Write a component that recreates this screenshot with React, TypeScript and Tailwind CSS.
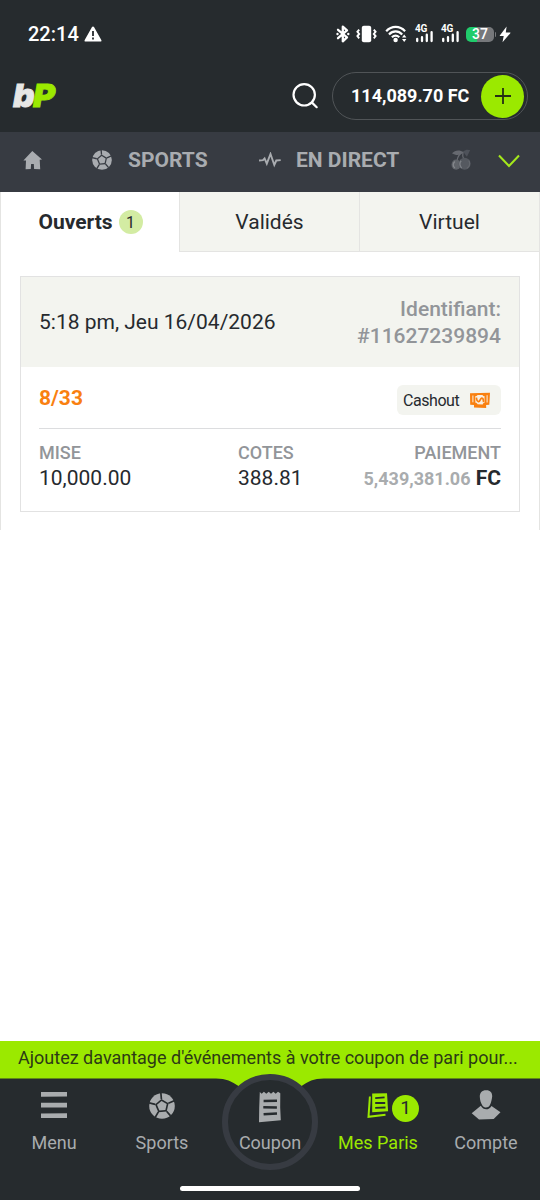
import React from "react";

function Football({ className, cut }: { className?: string; cut: string }) {
  return (
    <svg viewBox="0 0 26 26" className={className} fill="none">
      <circle cx="13" cy="13" r="12.8" fill="currentColor" />
      <g transform="rotate(-5 13 13)">
        <g stroke={cut} strokeWidth="1.7">
          <path d="M13 6V0M19.6 10.8l6-2M17.1 18.6l3.6 5M8.9 18.6l-3.6 5M6.4 10.8l-6-2" />
        </g>
        <path d="M13 5.9l6.8 4.9-2.6 8H8.8l-2.6-8z" fill={cut} />
        <path d="M13 7.9l4.9 3.5-1.9 5.8h-6l-1.9-5.8z" fill="currentColor" />
      </g>
    </svg>
  );
}

function Bluetooth() {
  return (
    <svg viewBox="0 0 14 18" className="h-[18px] w-[14px]" fill="none" stroke="#fff" strokeWidth="2.3" strokeLinejoin="round">
      <path d="M2 4.8l9 7.6-4.2 3.9V1.7L11 5.4l-9 7.8" strokeLinecap="round" />
      <circle cx="1.5" cy="9" r="1.2" fill="#fff" stroke="none" />
      <circle cx="12.3" cy="9" r="1.2" fill="#fff" stroke="none" />
    </svg>
  );
}

function Vibrate() {
  return (
    <svg viewBox="0 0 21 18" className="h-[18px] w-[21px]" fill="none">
      <rect x="5.8" y="0.7" width="9.4" height="16.6" rx="2" fill="#fff" />
      <path d="M3.2 4.6L1.4 6.8l1.8 2.1-1.8 2.2 1.8 2.2M17.8 4.6l1.8 2.2-1.8 2.1 1.8 2.2-1.8 2.2" stroke="#fff" strokeWidth="1.9" />
    </svg>
  );
}

function Wifi() {
  return (
    <svg viewBox="0 0 22 18" className="h-[18px] w-[22px]" fill="none">
      <path d="M1.2 6.2C6.6.5 14.7.5 20.1 6.2M4 9.4c3.9-4 9.4-4 13.2 0M6.9 12.3c2.2-2.1 5.2-2.1 7.4 0" stroke="#fff" strokeWidth="2.2" />
      <circle cx="10.6" cy="15" r="2.2" fill="#fff" />
      <path d="M17 12.6l2.2-3 2.2 3zM17 13.9l2.2 3 2.2-3z" fill="#fff" />
    </svg>
  );
}

function Signal() {
  return (
    <span className="relative block h-[18px] w-[18px]">
      <span className="absolute -top-px left-0 text-[10px] leading-[10px] font-bold tracking-[-0.3px]">4G</span>
      <svg viewBox="0 0 18 18" className="block h-[18px] w-[18px]" stroke="#fff" strokeWidth="2.3" strokeLinecap="round">
        <path d="M2.2 14v2M7 12.2V16M11.8 9.7V16M16.6 7.2V16" />
      </svg>
    </span>
  );
}

function Home() {
  return (
    <svg viewBox="0 0 20 20" className="h-5 w-5" fill="currentColor">
      <path d="M9.3.9L.4 10.6l2.600-.2-.4 8.800 5.200-.1.3-5h2.700l.3 5 6.100.1-.5-9.500 2.300-.2z" />
    </svg>
  );
}

function Cherries() {
  return (
    <svg viewBox="0 0 20 22" className="h-[22px] w-5">
      <path d="M1 4.3C4 .7 9 .5 12.5 3.3 10 6.3 5.3 7.2 1 4.3z" fill="#666970" />
      <path d="M12 2.5c3-2.3 5-2 7.2-1.4l-3.3 6.6" fill="#4e525a" />
      <path d="M10 4c-3 3-4 5-4 9M12 3c-1 4 0 6 1 8" stroke="#686b72" strokeWidth="1.2" fill="none" />
      <ellipse cx="5.1" cy="15.7" rx="4.6" ry="5.1" fill="#60646a" />
      <path d="M3.8 12.5c-2 2.1-1.9 4.7.1 6.7" stroke="#85888d" strokeWidth="1.2" fill="none" />
      <circle cx="13.6" cy="14.8" r="6" fill="#555960" />
      <path d="M10.1 11.8c-1.8 2.3-1.7 4.7.5 7.3" stroke="#7d8086" strokeWidth="1.4" fill="none" />
      <path d="M17.8 11.5c1.7 3.1.6 6.3-2 7.9" stroke="#666a70" strokeWidth="1.1" fill="none" />
    </svg>
  );
}

function Cash() {
  return (
    <svg viewBox="0 0 22 17" className="h-[17px] w-[22px]" fill="none">
      <path d="M1 1.3L21 .8l-.7 12-3.2.3.1 3-12.2-.6V13L1.2 12.7z" fill="#f98010" />
      <path d="M3.9 3.5v6.8M18.1 3.2v7.3" stroke="#f9efe2" strokeWidth="1" />
      <path d="M6.3 4.1c1.1.2 1.9-.2 2.2-1.1h5.1c.2.9.9 1.3 1.9 1.1v6.6c-1.1.2-1.7.8-1.8 1.9l-5.1-.3c-.2-1.1-1-1.600-2.200-1.600z" fill="#f9efe2" />
      <path d="M7.3 5.600c.7 1.200-.2 3.600 2 4 2.100.4 1.600-3.200 3.400-3.400 2.200-.1 1.300 2.700 2 3.800" stroke="#f98010" strokeWidth="1.7" />
    </svg>
  );
}

function Receipt() {
  return (
    <svg viewBox="0 0 26 32" className="h-8 w-[26px]">
      <path d="M2.8 1l1.900 1.800L6.900.8l2.400 2L11.700.8l2.300 1.900L16.400.8l2.300 1.900L21 .8l2.300 1.500-.1 14.300.6 12.600L2 31.200l.2-14z" fill="#a9acae" />
      <path d="M6.600 9.900l13.400-.1M6.300 16.200l13.600.2M6.600 23.300l13.400-.9" stroke="#262b2e" strokeWidth="2.500" />
    </svg>
  );
}

function Bets() {
  return (
    <svg viewBox="0 0 22 27" className="h-[27px] w-[22px]" fill="none">
      <path d="M5.200 1.500L20 1.200l1.100 18.100-15.900.9z" fill="#9be900" />
      <path d="M8.200 6.200l9.400-.9M8.200 11h10M8.200 15.800l10.300-.3" stroke="#262b2e" strokeWidth="1.800" />
      <path d="M2.900 4.500L1.500 24.800l17-2.100" stroke="#9be900" strokeWidth="2" />
    </svg>
  );
}

function User() {
  return (
    <svg viewBox="0 0 30 32" className="h-8 w-[30px]" fill="#a9acae">
      <path d="M15 1.200c3.800-.3 6.500 2 6.200 6.300-.4 3-1 6.300-2.400 8.800-1.400 2.800-5.600 3-7.300.4C9.700 14 9 11.300 8.800 7.800 8.600 3.800 11 1.200 15 1.200z" />
      <path d="M9.800 16.800c2.600 4.600 8 4.800 10.700.2L29.500 23.200 22.700 29.900 8 30.600.7 24.300z" />
    </svg>
  );
}

function StatusBar() {
  return (
    <div className="flex h-[68px] items-center pl-7 text-white">
      <span className="text-[20px] leading-6 font-medium">22:14</span>
      <svg viewBox="0 0 18 16" className="ml-[5px] h-4 w-[18px]">
        <path d="M9 .4c.5 0 .8.3 1 .6l7.300 13c.5.900 0 1.600-.9 1.600H1.600c-.9 0-1.400-.7-.9-1.600L8 1c.2-.300.500-.6 1-.6z" fill="#fff" />
        <path d="M9 5v5M9 11.500v2" stroke="#262b2e" strokeWidth="1.800" />
      </svg>
      <div className="ml-auto flex items-center pr-[29px]">
        <Bluetooth />
        <span className="ml-[6px]"><Vibrate /></span>
        <span className="ml-[8px]"><Wifi /></span>
        <span className="ml-[8px]"><Signal /></span>
        <span className="ml-[8px]"><Signal /></span>
        <span className="ml-[7px] flex h-[15px] w-7 items-center justify-center rounded-[5px] bg-[linear-gradient(to_right,#20cc6b_38%,#76787b_38%)] text-[14px] leading-[15px] font-medium">37</span>
        <span className="ml-px h-[5px] w-px rounded-r bg-[#76787b]" />
        <svg viewBox="0 0 12 17" className="ml-[3px] h-[17px] w-3 fill-white">
          <path d="M7.600.5L.8 9.400c-.3.400 0 .7.300.7h3.600L3.500 16.300 11.300 7.200c.3-.4.100-.8-.4-.8H6.800z" />
        </svg>
      </div>
    </div>
  );
}

function Header() {
  return (
    <div className="flex h-16 items-start px-3">
      <div className="mt-[11px] ml-px flex origin-left scale-x-105 font-['Inter',sans-serif] text-[32px] leading-[34px] font-black italic [-webkit-text-stroke-width:0.8px]">
        <span className="w-[19px] text-[#e7e7e5]">b</span>
        <span className="text-[#9be900]">P</span>
      </div>
      <svg viewBox="0 0 28 28" className="mt-[14px] mr-[13px] ml-auto h-7 w-7" fill="none" stroke="#fff" strokeWidth="2.200" strokeLinecap="round">
        <circle cx="13.200" cy="12.800" r="10.700" />
        <path d="M21 20.600l4.700 4.600" />
      </svg>
      <div className="mt-1 flex h-12 w-[196px] items-center justify-between rounded-full border border-[#505457] pr-[3px] pl-[18px] text-white">
        <span className="pb-px text-[18px] font-bold whitespace-nowrap">114,089.70 FC</span>
        <button className="flex h-[43px] w-[43px] items-center justify-center rounded-full bg-[#9be900]">
          <svg viewBox="0 0 16 16" className="h-4 w-4" stroke="#263014" strokeWidth="1.800">
            <path d="M8 0v16M0 8h16" />
          </svg>
        </button>
      </div>
    </div>
  );
}

function MainNav() {
  return (
    <nav className="flex h-[60px] items-center bg-[#373b42] pb-1 text-[21px] font-bold text-[#a9acb0]">
      <span className="ml-[23px]"><Home /></span>
      <span className="ml-[49px] flex w-[167px] items-center">
        <Football className="h-5 w-5" cut="#373b42" />
        <span className="ml-4 pt-0.5">SPORTS</span>
      </span>
      <span className="flex w-[192px] items-center whitespace-nowrap">
        <svg viewBox="0 0 22 16" className="h-4 w-[22px]" fill="none" stroke="currentColor" strokeWidth="1.900">
          <path d="M0 8.500l4-.3 1.600-1.800 2.200 5.300 3.700-9.700 3.800 11 2-4.500 4.400-.4" />
        </svg>
        <span className="ml-[15px] pt-0.5">EN DIRECT</span>
      </span>
      <Cherries />
      <svg viewBox="0 0 22 14" className="mt-px ml-[27px] h-[14px] w-[22px]" fill="none" stroke="#a4e81c" strokeWidth="2">
        <path d="M1 1.500L11 12 21 1.500" />
      </svg>
    </nav>
  );
}

function Tabs() {
  return (
    <div className="grid h-[60px] grid-cols-3 text-center text-[21px] leading-[59px] text-[#262a2e]">
      <div className="flex items-center justify-center border-l border-[#e4e4e2] font-bold">
        Ouverts
        <span className="ml-[6px] flex h-6 w-6 items-center justify-center rounded-full bg-[#d3eca3] text-[16px] font-normal">1</span>
      </div>
      <div className="-ml-px border border-t-0 border-[#e4e4e2] bg-[#f3f4ef] pt-px leading-[58px]">Validés</div>
      <div className="border-r border-b border-[#e4e4e2] bg-[#f3f4ef] pt-px leading-[58px]">Virtuel</div>
    </div>
  );
}

function Stat({ label, className, children }: { label: string; className: string; children: React.ReactNode }) {
  return (
    <div className={className}>
      <div className="text-[18px] leading-[26px] font-medium text-[#929599]">{label}</div>
      <div className="text-[21px] leading-[25px] whitespace-nowrap">{children}</div>
    </div>
  );
}

function BetCard() {
  return (
    <article className="h-[236px] border border-[#e2e2e2] bg-white text-[#262a2e]">
      <header className="flex h-[90px] items-center justify-between bg-[#f3f4ef] px-[18px] pt-0.5">
        <span className="text-[21px]">5:18 pm, Jeu 16/04/2026</span>
        <span className="text-right text-[21px] leading-[27px] font-medium text-[#929599]">
          Identifiant:<br />#11627239894
        </span>
      </header>
      <div className="mx-[18px] flex h-[62px] items-center justify-between border-b border-[#dcdddf]">
        <span className="pt-[3px] text-[21px] font-bold text-[#f98010]">8/33</span>
        <span className="mt-[5px] flex h-[30px] w-[104px] items-center justify-between rounded-[6px] bg-[#f3f4ef] pr-[10px] pl-[6px] text-[16px]">
          <span className="pt-px tracking-[-0.45px]">Cashout</span>
          <Cash />
        </span>
      </div>
      <div className="mx-[18px] flex pt-[11px]">
        <Stat label="MISE" className="w-[199px]">10,000.00</Stat>
        <Stat label="COTES" className="flex-1">388.81</Stat>
        <Stat label="PAIEMENT" className="text-right">
          <span className="text-[18px] font-bold text-[#a9acae]">5,439,381.06</span>{" "}
          <span className="font-bold">FC</span>
        </Stat>
      </div>
    </article>
  );
}

function NavItem({ label, active, children }: { label: string; active?: boolean; children: React.ReactNode }) {
  return (
    <div className={active ? "text-[#9be900]" : "text-[#a9acae]"}>
      <div className="flex h-[54px] items-center justify-center">{children}</div>
      <div className="text-center text-[18px] leading-[22px]">{label}</div>
    </div>
  );
}

function BottomNav() {
  return (
    <nav className="relative h-[122px] bg-[#9be900]">
      <svg viewBox="0 0 540 126" className="absolute -top-1 left-0 h-[126px] w-[540px]">
        <path d="M0 4.500h216c10 0 16 3 22.500 7.500h63c6.500-4.500 12-7.500 22.500-7.500h216V126H0z" fill="#262b2e" />
        <circle cx="270" cy="48" r="45" fill="#262b2e" stroke="#373b42" strokeWidth="6" />
      </svg>
      <div className="relative grid grid-cols-5">
        <NavItem label="Menu">
          <svg viewBox="0 0 26 26" className="h-[26px] w-[26px]" fill="currentColor">
            <path d="M0 0h26v4.500l-26 .3zM0 10.800h26v4.700H0zM0 21.600l26-.4V26H0z" />
          </svg>
        </NavItem>
        <NavItem label="Sports"><Football className="mt-px h-[26px] w-[26px]" cut="#262b2e" /></NavItem>
        <NavItem label="Coupon"><span className="mt-[3px]"><Receipt /></span></NavItem>
        <NavItem label="Mes Paris" active>
          <span className="ml-[30px]"><Bets /></span>
          <span className="mt-[6px] ml-[3px] flex h-[27px] w-[27px] items-center justify-center rounded-full bg-[#9be900] text-[19px] text-[#262b2e]">1</span>
        </NavItem>
        <NavItem label="Compte"><User /></NavItem>
      </div>
      <div className="relative mx-auto mt-[32px] h-[5px] w-[180px] rounded-full bg-white" />
    </nav>
  );
}

export default function App() {
  return (
    <div className="flex h-[1200px] w-[540px] flex-col overflow-hidden bg-white font-['Roboto',sans-serif]">
      <header className="bg-[#262b2e]">
        <StatusBar />
        <Header />
        <MainNav />
      </header>
      <Tabs />
      <main className="h-[278px] border-x border-[#e4e4e2] px-[19px] pt-6">
        <BetCard />
      </main>
      <div className="mt-auto h-[37px] bg-[#9be900] px-[18px] text-[18px] leading-[33px] whitespace-nowrap text-[#2b3a16]">
        Ajoutez davantage d'événements à votre coupon de pari pour...
      </div>
      <BottomNav />
    </div>
  );
}
